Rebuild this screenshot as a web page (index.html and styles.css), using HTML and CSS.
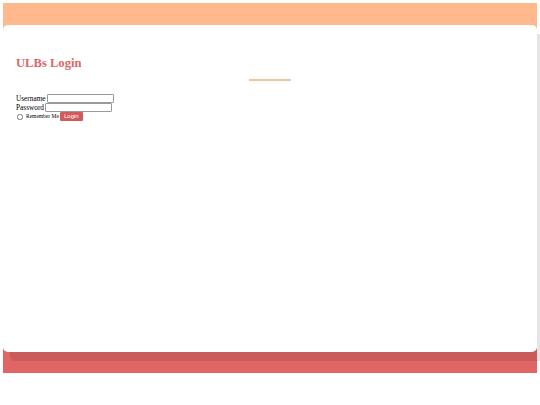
FILE: index.html
```html
<!DOCTYPE html>
<html>
<head>
<meta charset="utf-8">
<link rel="stylesheet" href="styles.css">
</head>
<body>
<div class="frame">
  <div class="card">
    <h1 class="title">ULBs Login</h1>
    <div class="divider"></div>
    <form class="form">
      <div class="row"><label class="lbl">Username</label><input class="field f1" type="text"></div>
      <div class="row"><label class="lbl">Password</label><input class="field f2" type="password"></div>
      <div class="row row3"><input class="chk" type="checkbox"><span class="rem">Remember Me</span><button class="btn" type="button">Login</button></div>
    </form>
  </div>
</div>
</body>
</html>
```
FILE: styles.css
```css
html, body { margin: 0; padding: 0; background: #fff; }
body { padding: 3px; font-family: "Liberation Serif", "Times New Roman", serif; }
.frame {
  width: 534px;
  height: 370px;
  box-sizing: border-box;
  padding: 22px 0 21px;
  background: linear-gradient(#ffb98c 0, #ffb98c 50%, #e06666 50%, #e06666 100%);
}
.card {
  height: 327px;
  box-sizing: border-box;
  background: #fff;
  border-radius: 5px;
  box-shadow: 7px 9px 0 rgba(0,0,0,0.1);
  padding: 30px 13px 0;
}
.title {
  margin: 0;
  font-size: 12.6px;
  line-height: 16px;
  font-weight: bold;
  color: #db6868;
}
.divider {
  width: 42px;
  height: 2px;
  background: #f3c3a1;
  margin: 8px auto 0;
}
.form { margin-top: 13px; }
.row { display: flex; align-items: center; height: 9px; font-size: 7.3px; line-height: 9px; color: #000; }
.lbl { margin-right: 1px; }
.field {
  box-sizing: border-box;
  height: 9px;
  border: 1px solid #9a9a9a;
  border-radius: 1px;
  padding: 0;
  margin: 0;
  background: #fff;
}
.f1 { width: 67px; }
.f2 { width: 67px; }
.chk { width: 6px; height: 6px; margin: 0 3px 0 1px; border-radius: 1px; }
.rem { font-size: 5.5px; margin-right: 1px; }
.btn {
  height: 9px;
  width: 23px;
  padding: 0;
  border: none;
  border-radius: 1px;
  background: #d35a5a;
  color: #fff;
  font-family: "Liberation Sans", Arial, sans-serif;
  font-size: 6px;
  line-height: 9px;
}
```
